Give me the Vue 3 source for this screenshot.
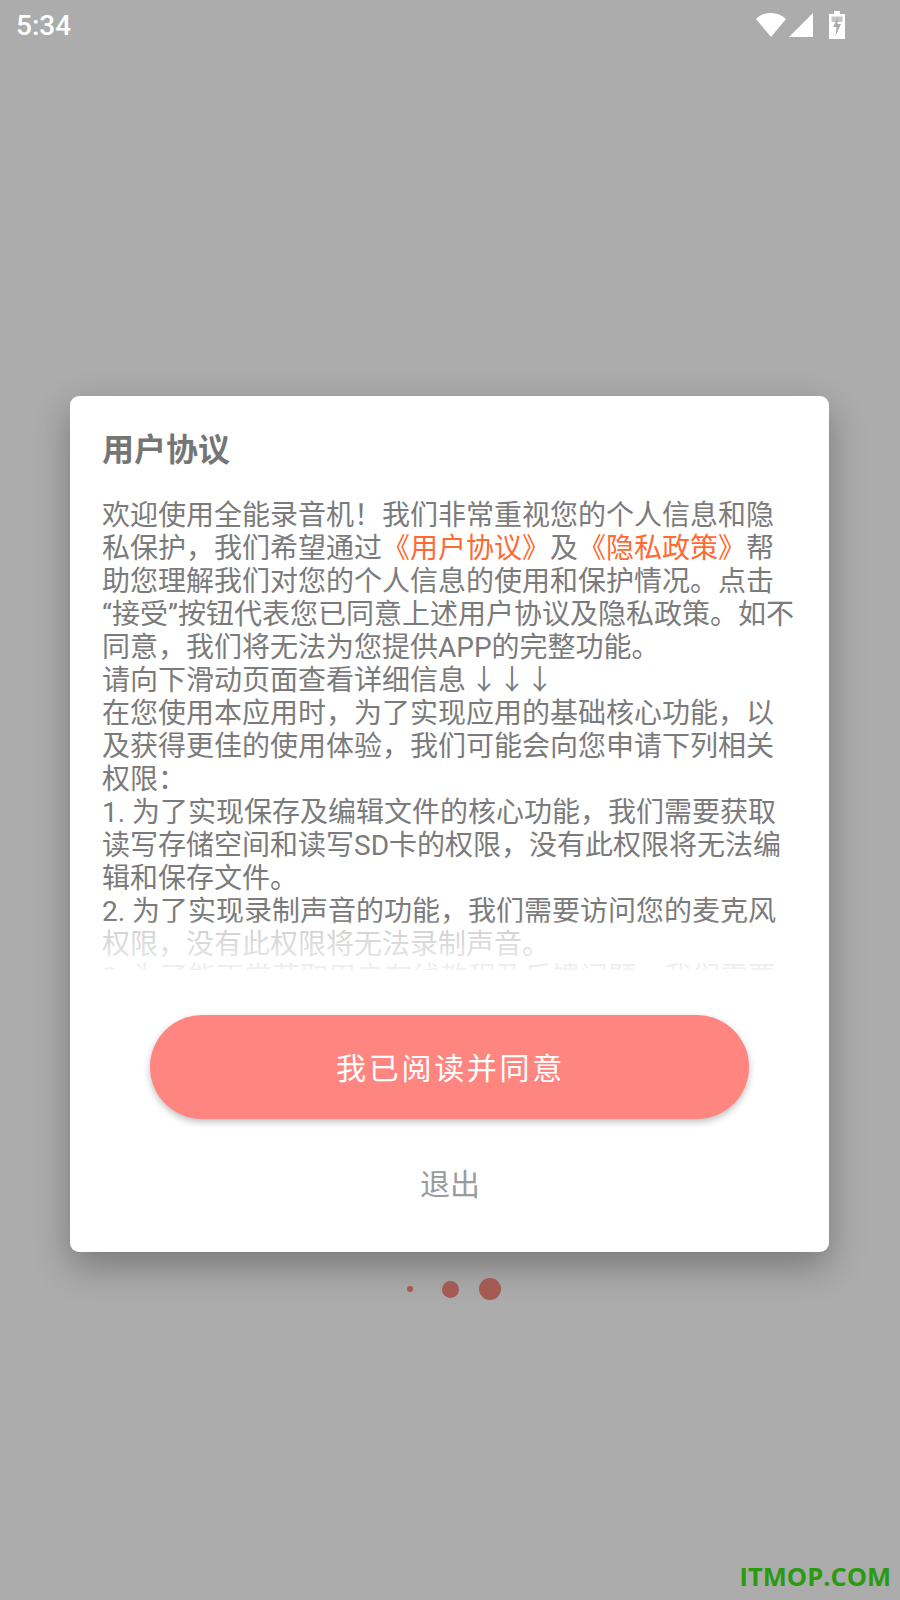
<template>
  <div class="page">
    <div class="status-bar">
      <span class="time">5:34</span>
      <div class="status-icons">
        <svg class="wifi" width="32" height="26" viewBox="0 0 32 26">
          <path d="M16 25 L1 7 C9 -1 23 -1 31 7 Z" fill="#fff" />
        </svg>
        <svg class="signal" width="26" height="26" viewBox="0 0 26 26">
          <path d="M25 1 V25 H1 Z" fill="#fff" />
        </svg>
        <svg class="battery" width="18" height="28" viewBox="0 0 18 28">
          <path d="M6 0 H12 V3 H17 V28 H1 V3 H6 Z" fill="#fff" />
          <path d="M3.5 5.5 H14.5 V11 H3.5 Z" fill="#acacac" opacity="0.7" />
          <path d="M10 6 L5 16 H8.5 L7.5 25 L13 13 H9.5 Z" fill="#acacac" />
        </svg>
      </div>
    </div>

    <div class="dialog">
      <h1 class="title">用户协议</h1>
      <div class="content">
        <p>
          欢迎使用全能录音机！我们非常重视您的个人信息和隐私保护，我们希望通过<span class="link">《用户协议》</span>及<span class="link">《隐私政策》</span>帮助您理解我们对您的个人信息的使用和保护情况。点击<wbr>“接受”按钮代表您已同意上述用户协议及隐私政策。如不同意，我们将无法为您提供APP的完整功能。
        </p>
        <p>请向下滑动页面查看详细信息 <span class="arrows">↓ ↓ ↓</span></p>
        <p>在您使用本应用时，为了实现应用的基础核心功能，以及获得更佳的使用体验，我们可能会向您申请下列相关权限：</p>
        <p>1. 为了实现保存及编辑文件的核心功能，我们需要获取读写存储空间和读写SD卡的权限，没有此权限将无法编辑和保存文件。</p>
        <p>2. 为了实现录制声音的功能，我们需要访问您的麦克风权限，没有此权限将无法录制声音。</p>
        <p>3. 为了能正常获取用户在线教程及反馈问题，我们需要</p>
        <div class="fade"></div>
      </div>
      <button class="agree"><span>我已阅读并同意</span></button>
      <button class="quit">退出</button>
    </div>

    <div class="dots">
      <i class="dot small"></i>
      <i class="dot mid"></i>
      <i class="dot big"></i>
    </div>

    <span class="watermark">ITMOP.COM</span>
  </div>
</template>

<script setup>
</script>

<style>
body {
  margin: 0;
}
</style>

<style scoped>
.page {
  position: relative;
  width: 900px;
  height: 1600px;
  background: #acacac;
  overflow: hidden;
  font-family: Roboto, "Noto Sans CJK SC", sans-serif;
}

.status-bar {
  display: flex;
  align-items: center;
  justify-content: space-between;
  height: 50px;
  padding: 0 54px 0 16px;
}

.time {
  color: #fff;
  font-size: 28px;
  font-weight: 500;
}

.status-icons {
  display: flex;
  align-items: center;
  gap: 1px;
}

.battery {
  margin-left: 13px;
}

.dialog {
  width: 759px;
  height: 856px;
  margin: 346px 0 0 70px;
  padding: 35px 32px 0;
  box-sizing: border-box;
  background: #fff;
  border-radius: 9px;
  box-shadow: 0 14px 36px rgba(0, 0, 0, 0.3);
  display: flex;
  flex-direction: column;
  align-items: center;
}

.title {
  align-self: stretch;
  margin: 0;
  color: #757575;
  font-size: 32px;
  line-height: 38px;
  font-weight: 700;
}

.content {
  position: relative;
  align-self: flex-start;
  width: 696px;
  height: 471px;
  margin-top: 30px;
  overflow: hidden;
  color: #7b7b7b;
  font-size: 28px;
  line-height: 33px;
}

.content p {
  margin: 0;
}

.link {
  color: #ff6a33;
}

.arrows {
  margin-left: -3px;
  letter-spacing: -3.5px;
}

.fade {
  position: absolute;
  left: 0;
  right: 0;
  bottom: 0;
  height: 50px;
  background: linear-gradient(
    rgba(255, 255, 255, 0),
    rgba(255, 255, 255, 0.65) 15%,
    rgba(255, 255, 255, 0.75) 55%,
    rgba(255, 255, 255, 0.9)
  );
}

button {
  font-family: inherit;
  border: none;
  padding: 0;
}

.agree {
  width: 599px;
  height: 104px;
  margin-top: 45px;
  padding: 0 0 2px 2px;
  flex: none;
  border-radius: 52px;
  background: #ff8680;
  color: #fff;
  font-size: 30px;
  letter-spacing: 2.7px;
  box-shadow: 0 3px 7px rgba(0, 0, 0, 0.25);
}

.quit {
  margin-top: 23px;
  height: 80px;
  padding-left: 1px;
  background: none;
  color: #9b9b9b;
  font-size: 30px;
}

.dots {
  display: grid;
  grid-template-columns: repeat(3, 40px);
  justify-content: center;
  justify-items: center;
  align-items: center;
  height: 22px;
  margin-top: 26px;
}

.dot {
  display: block;
  border-radius: 50%;
  background: #a35a52;
}

.small {
  width: 6px;
  height: 6px;
}

.mid {
  width: 17px;
  height: 17px;
}

.big {
  width: 22px;
  height: 22px;
}

.watermark {
  position: absolute;
  right: 9px;
  bottom: 11px;
  color: #2a9a10;
  font-family: "Open Sans", sans-serif;
  font-size: 25.5px;
  line-height: 26px;
  font-weight: 700;
}
</style>
